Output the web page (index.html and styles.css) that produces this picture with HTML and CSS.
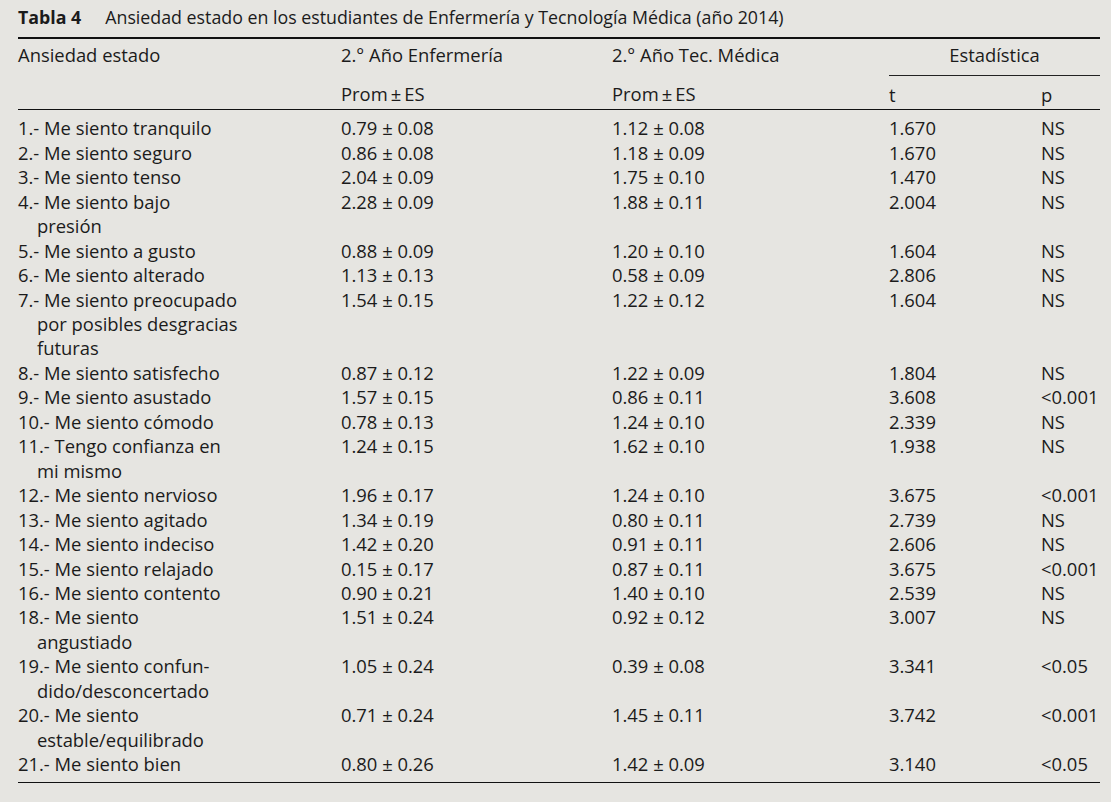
FILE: index.html
```html
<!DOCTYPE html>
<html lang="es">
<head>
<meta charset="utf-8">
<title>Tabla 4</title>
<link rel="stylesheet" href="styles.css">
</head>
<body>
<div class="panel">
  <div class="caption"><span class="label">Tabla 4</span>Ansiedad estado en los estudiantes de Enfermería y Tecnología Médica (año 2014)</div>
  <table class="tbl">
    <colgroup>
      <col class="c1"><col class="c2"><col class="c3"><col class="c4"><col class="c5">
    </colgroup>
    <thead>
      <tr class="h1">
        <th>Ansiedad estado</th>
        <th>2.° Año Enfermería</th>
        <th>2.° Año Tec. Médica</th>
        <th colspan="2" class="stat">Estadística</th>
      </tr>
      <tr class="h2">
        <th></th>
        <th>Prom&thinsp;±&thinsp;ES</th>
        <th>Prom&thinsp;±&thinsp;ES</th>
        <th>t</th>
        <th>p</th>
      </tr>
    </thead>
    <tbody>
      <tr class="first"><td class="item">1.- Me siento tranquilo</td><td>0.79 ± 0.08</td><td>1.12 ± 0.08</td><td>1.670</td><td>NS</td></tr>
      <tr><td class="item">2.- Me siento seguro</td><td>0.86 ± 0.08</td><td>1.18 ± 0.09</td><td>1.670</td><td>NS</td></tr>
      <tr><td class="item">3.- Me siento tenso</td><td>2.04 ± 0.09</td><td>1.75 ± 0.10</td><td>1.470</td><td>NS</td></tr>
      <tr><td class="item">4.- Me siento bajo<br>presión</td><td>2.28 ± 0.09</td><td>1.88 ± 0.11</td><td>2.004</td><td>NS</td></tr>
      <tr><td class="item">5.- Me siento a gusto</td><td>0.88 ± 0.09</td><td>1.20 ± 0.10</td><td>1.604</td><td>NS</td></tr>
      <tr><td class="item">6.- Me siento alterado</td><td>1.13 ± 0.13</td><td>0.58 ± 0.09</td><td>2.806</td><td>NS</td></tr>
      <tr><td class="item">7.- Me siento preocupado<br>por posibles desgracias<br>futuras</td><td>1.54 ± 0.15</td><td>1.22 ± 0.12</td><td>1.604</td><td>NS</td></tr>
      <tr><td class="item">8.- Me siento satisfecho</td><td>0.87 ± 0.12</td><td>1.22 ± 0.09</td><td>1.804</td><td>NS</td></tr>
      <tr><td class="item">9.- Me siento asustado</td><td>1.57 ± 0.15</td><td>0.86 ± 0.11</td><td>3.608</td><td>&lt;0.001</td></tr>
      <tr><td class="item">10.- Me siento cómodo</td><td>0.78 ± 0.13</td><td>1.24 ± 0.10</td><td>2.339</td><td>NS</td></tr>
      <tr><td class="item">11.- Tengo confianza en<br>mi mismo</td><td>1.24 ± 0.15</td><td>1.62 ± 0.10</td><td>1.938</td><td>NS</td></tr>
      <tr><td class="item">12.- Me siento nervioso</td><td>1.96 ± 0.17</td><td>1.24 ± 0.10</td><td>3.675</td><td>&lt;0.001</td></tr>
      <tr><td class="item">13.- Me siento agitado</td><td>1.34 ± 0.19</td><td>0.80 ± 0.11</td><td>2.739</td><td>NS</td></tr>
      <tr><td class="item">14.- Me siento indeciso</td><td>1.42 ± 0.20</td><td>0.91 ± 0.11</td><td>2.606</td><td>NS</td></tr>
      <tr><td class="item">15.- Me siento relajado</td><td>0.15 ± 0.17</td><td>0.87 ± 0.11</td><td>3.675</td><td>&lt;0.001</td></tr>
      <tr><td class="item">16.- Me siento contento</td><td>0.90 ± 0.21</td><td>1.40 ± 0.10</td><td>2.539</td><td>NS</td></tr>
      <tr><td class="item">18.- Me siento<br>angustiado</td><td>1.51 ± 0.24</td><td>0.92 ± 0.12</td><td>3.007</td><td>NS</td></tr>
      <tr><td class="item">19.- Me siento confun-<br>dido/desconcertado</td><td>1.05 ± 0.24</td><td>0.39 ± 0.08</td><td>3.341</td><td>&lt;0.05</td></tr>
      <tr><td class="item">20.- Me siento<br>estable/equilibrado</td><td>0.71 ± 0.24</td><td>1.45 ± 0.11</td><td>3.742</td><td>&lt;0.001</td></tr>
      <tr class="last"><td class="item">21.- Me siento bien</td><td>0.80 ± 0.26</td><td>1.42 ± 0.09</td><td>3.140</td><td>&lt;0.05</td></tr>
    </tbody>
  </table>
</div>
</body>
</html>
```

FILE: styles.css
```css
html, body {
  margin: 0;
  padding: 0;
  background: #e6e5e1;
}
body {
  width: 1111px;
  height: 802px;
  overflow: hidden;
}
.panel {
  padding: 5px 11px 0 18px;
  font-family: "Open Sans", "Lato", sans-serif;
  font-size: 18.4px;
  line-height: 24.45px;
  color: #1b1b1b;
}
.caption {
  height: 24.5px;
  margin-bottom: 7px;
  white-space: nowrap;
  font-size: 17.8px;
}
.label {
  font-weight: 700;
  margin-right: 24px;
}
.tbl {
  width: 1082px;
  table-layout: fixed;
  border-collapse: collapse;
  border-top: 2px solid #111;
  border-bottom: 1px solid #111;
}
.c1 { width: 323px; }
.c2 { width: 271px; }
.c3 { width: 277px; }
.c4 { width: 152px; }
.c5 { width: 59px; }
th, td {
  padding: 0;
  text-align: left;
  vertical-align: top;
  font-weight: normal;
  white-space: nowrap;
}
.h1 th {
  padding-top: 4px;
  padding-bottom: 8px;
}
.h1 th.stat {
  text-align: center;
  border-bottom: 1px solid #222;
}
.h2 th {
  padding-top: 7px;
  padding-bottom: 2px;
  border-bottom: 1px solid #111;
}
tbody tr.first td { padding-top: 6px; }
tbody tr.last td { padding-bottom: 5px; }
td.item {
  padding-left: 19px;
  text-indent: -19px;
}
```
